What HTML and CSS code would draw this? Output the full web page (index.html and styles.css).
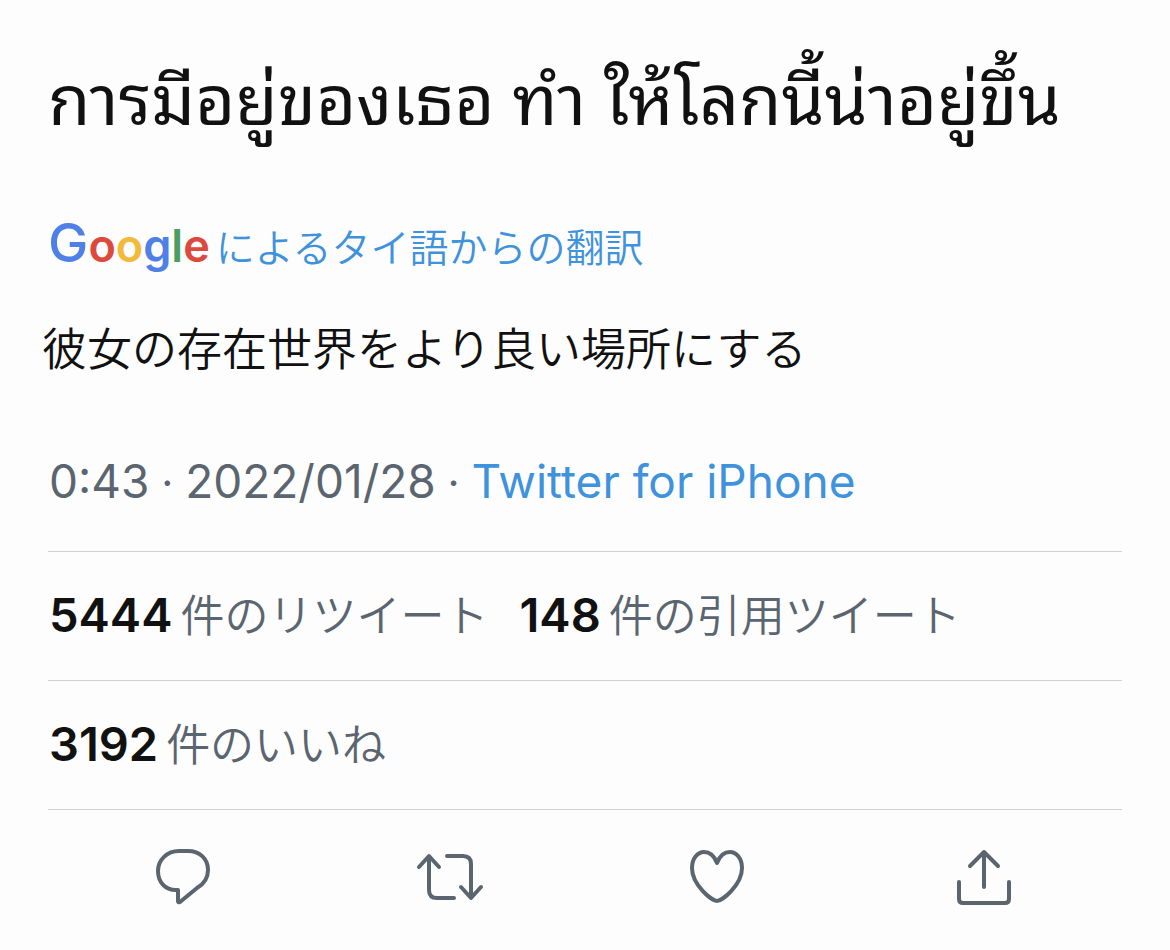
FILE: index.html
```html
<!DOCTYPE html>
<html lang="ja">
<head>
<meta charset="utf-8">
<meta name="viewport" content="width=device-width, initial-scale=1">
<title>Tweet</title>
<link rel="stylesheet" href="styles.css">
</head>
<body>
<article class="tweet">
  <p class="original" lang="th">การมีอยู่ของเธอ ทำ ให้โลกนี้น่าอยู่ขึ้น</p>
  <div class="source"><span class="google"><span class="blue capital">G</span><span class="red">o</span><span class="yellow">o</span><span class="blue">g</span><span class="green">l</span><span class="red">e</span></span><a href="#" class="source-link">によるタイ語からの翻訳</a></div>
  <p class="translation">彼女の存在世界をより良い場所にする</p>
  <div class="meta"><time>0:43<span class="dot"> · </span>2022/01/28</time><span class="dot"> · </span><a href="#">Twitter for iPhone</a></div>
  <div class="stats">
    <a href="#" class="stat"><strong>5444</strong><span>件のリツイート</span></a>
    <a href="#" class="stat"><strong>148</strong><span>件の引用ツイート</span></a>
  </div>
  <div class="stats">
    <a href="#" class="stat"><strong>3192</strong><span>件のいいね</span></a>
  </div>
  <div class="actions">
    <button type="button" aria-label="返信"><svg viewBox="0 0 72 64"><path d="M32 6h9c12 0 20 8 20 19 0 8-4 14-11 18L33 57q-2 1-2-1V45h-2C18 45 11 37 11 26S20 6 32 6z"/></svg></button>
    <button type="button" aria-label="リツイート"><svg viewBox="0 0 72 64"><path d="M5 22 15 11l10 11M15 12v33q0 8 8 8h17M33 11h16q8 0 8 8v33M47 42l10 11 10-11"/></svg></button>
    <button type="button" aria-label="いいね"><svg viewBox="0 0 72 64"><path d="M36 56C31 56 11 40 11 23 11 13 17 7 23 7c6 0 10 3 13 11 3-8 7-11 13-11 6 0 12 6 12 16 0 17-20 33-25 33z"/></svg></button>
    <button type="button" aria-label="共有"><svg viewBox="0 0 72 64"><path d="M36 42V7M22 21 36 7l14 14M11 37v17q0 4 4 4h42q4 0 4-4V37"/></svg></button>
  </div>
</article>
</body>
</html>
```
FILE: styles.css
```css
* { box-sizing: border-box; }
body { margin: 0; background: #fdfdfd; color: #111; font-family: Inter, "Noto Sans CJK JP", sans-serif; }
a { text-decoration: none; color: #3f92dc; }
p { margin: 0; }
.tweet { padding: 48px 48px 0; }
.original { font-family: "Noto Sans Thai Looped", "Noto Looped Thai", Loma, Garuda, Waree, "Noto Sans Thai", sans-serif; font-size: 69px; line-height: 92px; }
.source { display: flex; align-items: baseline; gap: 6px; line-height: 56px; margin-top: 75px; }
.google { font-size: 45px; font-weight: 600; }
.capital { font-size: 54px; font-weight: 500; }
.blue { color: #4f80e8; }
.red { color: #dc4a3d; }
.yellow { color: #f2b93a; }
.green { color: #4b9e62; }
.source-link { font-size: 39px; font-weight: 350; }
.translation { margin: 44px 0 0 -6px; font-size: 45px; line-height: 60px; font-weight: 350; }
.meta { margin-top: 71px; padding: 0 0 38px 1px; font-size: 46px; line-height: 60px; color: #5b6570; border-bottom: 1px solid #ccd2d6; }
.dot { font-size: 42px; }
.stats { display: flex; gap: 31px; height: 129px; padding: 0 0 6px 1px; align-items: center; border-bottom: 1px solid #ccd2d6; font-size: 44px; }
.stat { display: flex; gap: 8px; align-items: baseline; color: #5b6570; font-weight: 350; }
.stat strong { color: #111; font-size: 47px; font-weight: 600; }
.actions { display: flex; justify-content: space-around; height: 134px; padding: 0 5px 0 1px; align-items: center; }
button { border: 0; padding: 0; background: none; }
svg { display: block; width: 72px; height: 64px; fill: none; stroke: #5b6570; stroke-width: 4; stroke-linecap: round; stroke-linejoin: round; }
```
